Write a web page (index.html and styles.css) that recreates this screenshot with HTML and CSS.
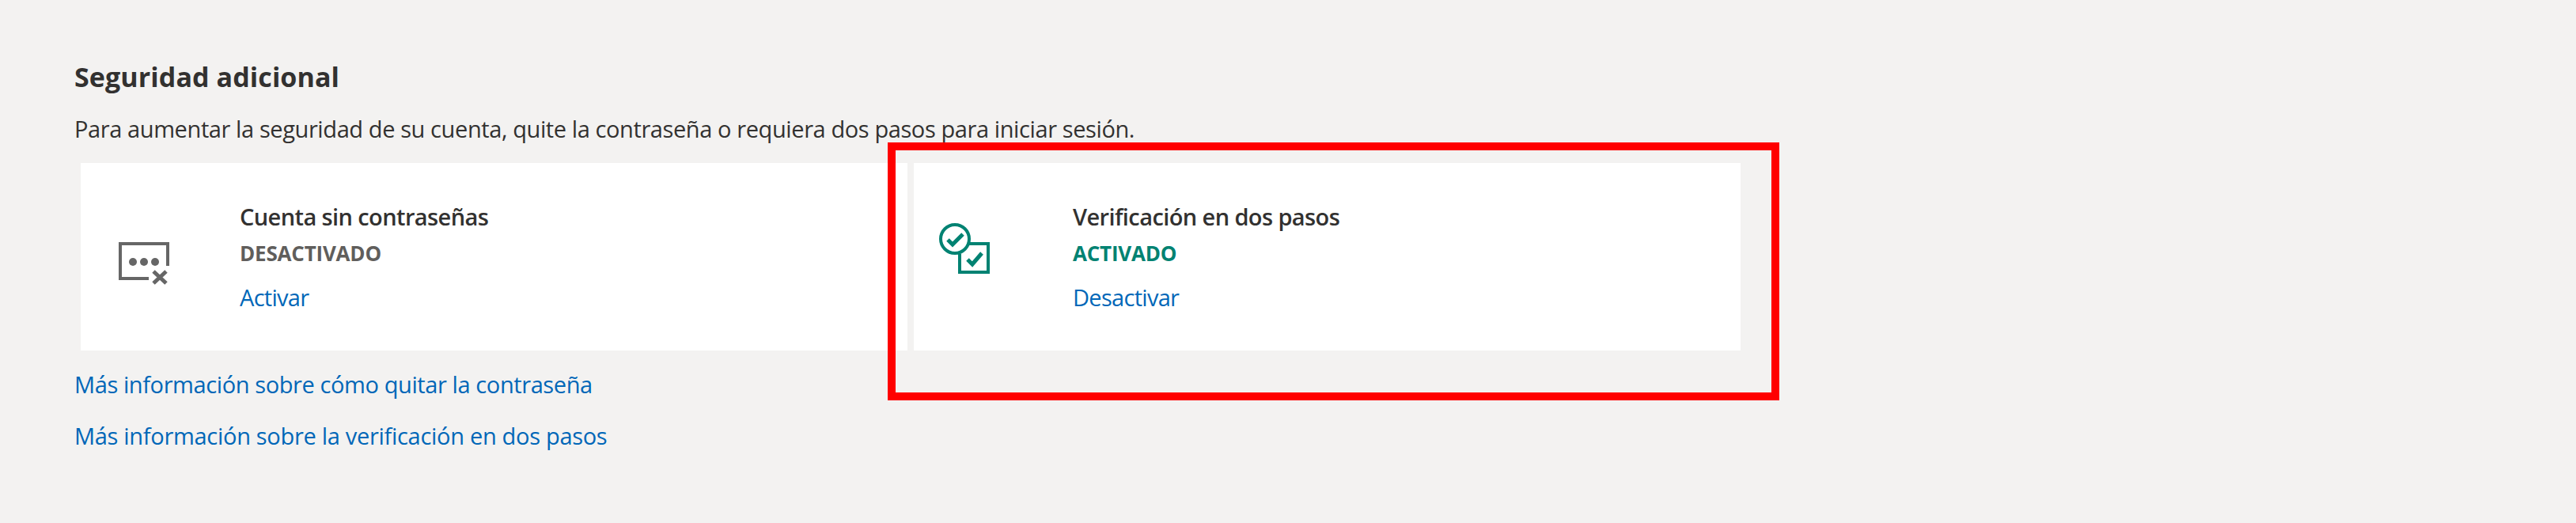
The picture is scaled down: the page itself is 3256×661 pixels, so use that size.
FILE: index.html

```html
<!DOCTYPE html>
<html lang="es">
<head>
  <meta charset="UTF-8" />
  <meta name="viewport" content="width=device-width, initial-scale=1.0" />
  <title>Seguridad adicional</title>
  <link rel="stylesheet" href="styles.css">
</head>
<body>
  <div class="section">
    <h2>Seguridad adicional</h2>
    <p class="intro">Para aumentar la seguridad de su cuenta, quite la contraseña o requiera dos pasos para iniciar sesión.</p>

    <div class="cards">
      <div class="card">
        <svg class="card-icon" viewBox="0 0 96 96" fill="none" stroke="#666" stroke-width="4">
          <path d="M78 66V38H18V82H54" />
          <circle cx="34" cy="61" r="5" fill="#666" stroke="none" />
          <circle cx="48" cy="61" r="5" fill="#666" stroke="none" />
          <circle cx="62" cy="61" r="5" fill="#666" stroke="none" />
          <path d="M60 73L76 88M76 73L60 88" stroke-width="5" />
        </svg>
        <div class="card-body">
          <div class="card-title">Cuenta sin contraseñas</div>
          <div class="status status-off">DESACTIVADO</div>
          <a class="link" href="#">Activar</a>
        </div>
      </div>

      <div class="card">
        <svg class="card-icon" viewBox="0 0 96 96" fill="none" stroke="#008272" stroke-width="4">
          <circle cx="20" cy="32" r="18" />
          <path d="M11 33L17 39L30 26" stroke-width="5" />
          <path d="M38 38H62V74H26V51" />
          <path d="M36 58L42 64L54 50" stroke-width="5" />
        </svg>
        <div class="card-body">
          <div class="card-title">Verificación en dos pasos</div>
          <div class="status status-on">ACTIVADO</div>
          <a class="link" href="#">Desactivar</a>
        </div>
      </div>
    </div>

    <ul class="more-links">
      <li><a class="link" href="#">Más información sobre cómo quitar la contraseña</a></li>
      <li><a class="link" href="#">Más información sobre la verificación en dos pasos</a></li>
    </ul>
  </div>

  <div class="highlight"></div>
</body>
</html>
```

FILE: styles.css

```css
body {
  margin: 0;
  background-color: #f3f2f1;
  color: #323130;
  font-family: 'Open Sans', 'Noto Sans', sans-serif;
}
.section {
  padding: 75px 0 0 94px;
}
h2 {
  margin: 0;
  font-size: 34px;
  line-height: 44px;
  font-weight: 700;
  letter-spacing: 0.1px;
}
.intro {
  margin: 22px 0 0;
  font-size: 29px;
  line-height: 44px;
  letter-spacing: -0.4px;
}
.cards {
  display: flex;
  gap: 8px;
  margin: 21px 0 0 8px;
}
.card {
  width: 1045px;
  height: 237px;
  background-color: #fff;
  display: flex;
  padding-left: 32px;
  box-sizing: border-box;
}
.card-icon {
  width: 96px;
  height: 96px;
  margin-top: 64px;
  flex-shrink: 0;
}
.card-body {
  margin-left: 73px;
  padding-top: 50px;
}
.card-title {
  font-size: 29px;
  line-height: 36px;
  font-weight: 600;
  letter-spacing: -0.6px;
}
.status {
  font-size: 26px;
  line-height: 36px;
  font-weight: 700;
  margin-top: 10px;
  letter-spacing: -0.2px;
}
.status-off {
  color: #605e5c;
}
.status-on {
  color: #008272;
}
.link {
  color: #0067b8;
  text-decoration: none;
  font-size: 29px;
  line-height: 36px;
  letter-spacing: -0.4px;
}
.card-body .link {
  display: block;
  margin-top: 20px;
  letter-spacing: -0.7px;
}
.more-links {
  list-style: none;
  margin: 25px 0 0;
  padding: 0;
}
.more-links li {
  line-height: 36px;
  margin-bottom: 24px;
}
.more-links li:last-child .link {
  letter-spacing: -0.3px;
}
.highlight {
  position: absolute;
  left: 1122px;
  top: 180px;
  width: 1107px;
  height: 306px;
  border: 10px solid #f00;
}
```
